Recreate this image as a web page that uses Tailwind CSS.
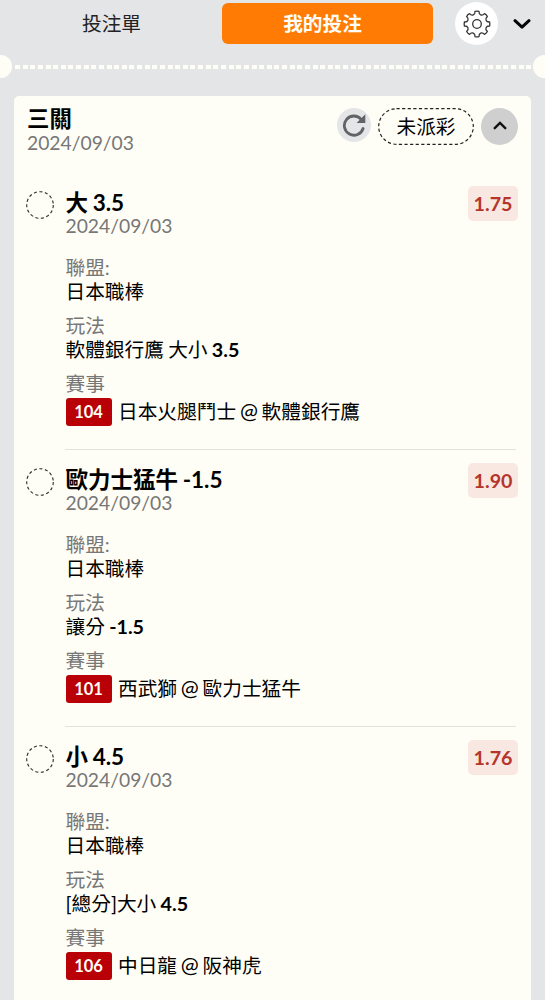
<!DOCTYPE html>
<html lang="zh-Hant">
<head>
<meta charset="utf-8">
<title>我的投注</title>
<script src="https://cdn.jsdelivr.net/npm/@tailwindcss/browser@4"></script>
</head>
<body class="h-[1000px] overflow-hidden bg-[#e4e5e7] font-['Lato','Noto_Sans_CJK_TC',sans-serif] text-[19.7px] leading-6 text-black">
<header class="flex h-[47px] items-start">
  <div class="flex h-[47px] w-[223px] items-center justify-center text-[#222]">投注單</div>
  <div class="-ml-px mt-[3px] flex h-[41px] w-[211px] items-center justify-center rounded-md bg-[#ff7b04] font-bold text-[#fffef6]"><span class="-translate-x-[5px]">我的投注</span></div>
  <div class="ml-[22px] mt-[2px] flex size-[43px] items-center justify-center rounded-full bg-white">
    <svg class="size-7" viewBox="-14 -14 28 28" fill="none" stroke="#333" stroke-width="1.3" stroke-linejoin="round"><circle r="4.3"/><path d="M12.64 2C8.93 1.74 7.54 5.09 10.36 7.52Q9.4 9.4 7.52 10.36C5.09 7.54 1.74 8.93 2 12.64Q0 13-2 12.64C-1.74 8.93-5.09 7.54-7.52 10.36Q-9.4 9.4-10.36 7.52C-7.54 5.09-8.93 1.74-12.64 2Q-13 0-12.64-2C-8.93-1.74-7.54-5.09-10.36-7.52Q-9.4-9.4-7.52-10.36C-5.09-7.54-1.74-8.93-2-12.64Q0-13 2-12.64C1.74-8.93 5.09-7.54 7.52-10.36Q9.4-9.4 10.36-7.52C7.54-5.09 8.93-1.74 12.64-2Q13 0 12.64 2Z"/></svg>
  </div>
  <svg class="ml-[15px] mt-[18px] h-3 w-[18px]" viewBox="0 0 18 12" fill="none" stroke="#050505" stroke-width="3" stroke-linecap="round" stroke-linejoin="round"><path d="M2 2.7 9 9.2 16 2.7"/></svg>
</header>
<div class="flex h-[38px] items-center justify-between overflow-hidden">
  <div class="-ml-[11px] size-[23px] shrink-0 rounded-full bg-[#fffef6]"></div>
  <div class="ml-[3px] mr-0 mt-[2px] h-[4px] flex-1 bg-[repeating-linear-gradient(90deg,#fffef6_0_5px,transparent_5px_7.63px)]"></div>
  <div class="-mr-[11px] size-[23px] shrink-0 rounded-full bg-[#fffef6]"></div>
</div>
<main class="ml-[14px] mt-[11px] h-[920px] w-[517px] rounded-t-[5px] bg-[#fffef6]">
  <div class="flex h-[76px] items-start pl-[13px] pr-[13px]">
    <div class="flex-1 pt-[11px]">
      <div class="h-6 text-[22.4px] font-bold">三關</div>
      <div class="text-[19.3px] text-[#777]">2024/09/03</div>
    </div>
    <div class="mt-[12px] flex size-[34px] items-center justify-center rounded-full bg-[#e4e5e7]">
      <svg class="size-6" viewBox="0 0 24 24" fill="none"><path d="M19.2 6.3A9.6 9.6 0 1 0 21.1 15.5" stroke="#626267" stroke-width="2.8" stroke-linecap="round"/><path d="M23.3 1.3v8.7h-8.7z" fill="#626267"/></svg>
    </div>
    <div class="ml-[7px] mt-[12px] h-[37px] w-[96px]">
      <div class="grid h-full place-items-center">
        <svg class="col-start-1 row-start-1 h-[37px] w-[96px]" fill="none" stroke="#222" stroke-width="1.2" stroke-dasharray="3.2 2.4"><rect x=".7" y=".7" width="94.6" height="35.6" rx="17.8"/></svg>
        <span class="col-start-1 row-start-1">未派彩</span>
      </div>
    </div>
    <div class="ml-[7px] mt-[12px] flex size-[37px] items-center justify-center rounded-full bg-[#cfcfcf]">
      <svg class="-mt-[2px] h-[9px] w-[14px]" viewBox="0 0 14 9" fill="none" stroke="#111" stroke-width="2.4" stroke-linecap="round"><path d="M1.7 7.2 7 2l5.3 5.2"/></svg>
    </div>
  </div>

  <section class="flex h-[277px] pl-[12px] pr-[13px]">
    <svg class="mt-[19px] size-7 shrink-0" viewBox="0 0 28 28" fill="none" stroke="#333" stroke-width="1.15" stroke-dasharray="3.1 2.5"><circle cx="14" cy="14" r="13.3"/></svg>
    <div class="ml-[11.5px] flex-1 pt-[19px] [word-spacing:-0.8px]">
      <div class="h-6 text-[22.5px] font-bold">大 3.5</div>
      <div class="-mt-px h-6 text-[19.3px] text-[#777]">2024/09/03</div>
      <div class="mt-[18px] h-6 text-[#777]">聯盟:</div>
      <div class="h-6">日本職棒</div>
      <div class="mt-[10px] h-6 text-[#777]">玩法</div>
      <div class="h-6">軟體銀行鷹 大小 <b>3.5</b></div>
      <div class="mt-[10px] h-6 text-[#777]">賽事</div>
      <div class="mt-[2px] flex h-7 items-center"><span class="flex h-7 w-[46px] items-center justify-center rounded-[3px] bg-[#b90006] text-[16.5px] font-bold text-[#fffef6]">104</span><span class="ml-[6.5px]">日本火腿鬥士 <span class="-mx-[0.5px] text-[21.5px] leading-none">@</span> 軟體銀行鷹</span></div>
    </div>
    <div class="mt-[14px] flex h-[35px] w-[50px] shrink-0 items-center justify-center rounded-[5px] bg-[#f8e8e1] font-bold text-[#b5352d]">1.75</div>
  </section>

  <div class="ml-[51px] mr-[15px] h-px bg-[#e3e2dd]"></div>
  <section class="-mt-px flex h-[277px] pl-[12px] pr-[13px]">
    <svg class="mt-[19px] size-7 shrink-0" viewBox="0 0 28 28" fill="none" stroke="#333" stroke-width="1.15" stroke-dasharray="3.1 2.5"><circle cx="14" cy="14" r="13.3"/></svg>
    <div class="ml-[11.5px] flex-1 pt-[19px] [word-spacing:-0.8px]">
      <div class="h-6 text-[22.5px] font-bold">歐力士猛牛 -1.5</div>
      <div class="-mt-px h-6 text-[19.3px] text-[#777]">2024/09/03</div>
      <div class="mt-[18px] h-6 text-[#777]">聯盟:</div>
      <div class="h-6">日本職棒</div>
      <div class="mt-[10px] h-6 text-[#777]">玩法</div>
      <div class="h-6">讓分 <b>-1.5</b></div>
      <div class="mt-[10px] h-6 text-[#777]">賽事</div>
      <div class="mt-[2px] flex h-7 items-center"><span class="flex h-7 w-[46px] items-center justify-center rounded-[3px] bg-[#b90006] text-[16.5px] font-bold text-[#fffef6]">101</span><span class="ml-[6.5px]">西武獅 <span class="-mx-[0.5px] text-[21.5px] leading-none">@</span> 歐力士猛牛</span></div>
    </div>
    <div class="mt-[14px] flex h-[35px] w-[50px] shrink-0 items-center justify-center rounded-[5px] bg-[#f8e8e1] font-bold text-[#b5352d]">1.90</div>
  </section>

  <div class="ml-[51px] mr-[15px] h-px bg-[#e3e2dd]"></div>
  <section class="-mt-px flex h-[277px] pl-[12px] pr-[13px]">
    <svg class="mt-[19px] size-7 shrink-0" viewBox="0 0 28 28" fill="none" stroke="#333" stroke-width="1.15" stroke-dasharray="3.1 2.5"><circle cx="14" cy="14" r="13.3"/></svg>
    <div class="ml-[11.5px] flex-1 pt-[19px] [word-spacing:-0.8px]">
      <div class="h-6 text-[22.5px] font-bold">小 4.5</div>
      <div class="-mt-px h-6 text-[19.3px] text-[#777]">2024/09/03</div>
      <div class="mt-[18px] h-6 text-[#777]">聯盟:</div>
      <div class="h-6">日本職棒</div>
      <div class="mt-[10px] h-6 text-[#777]">玩法</div>
      <div class="h-6">[總分]大小 <b>4.5</b></div>
      <div class="mt-[10px] h-6 text-[#777]">賽事</div>
      <div class="mt-[2px] flex h-7 items-center"><span class="flex h-7 w-[46px] items-center justify-center rounded-[3px] bg-[#b90006] text-[16.5px] font-bold text-[#fffef6]">106</span><span class="ml-[6.5px]">中日龍 <span class="-mx-[0.5px] text-[21.5px] leading-none">@</span> 阪神虎</span></div>
    </div>
    <div class="mt-[14px] flex h-[35px] w-[50px] shrink-0 items-center justify-center rounded-[5px] bg-[#f8e8e1] font-bold text-[#b5352d]">1.76</div>
  </section>
</main>
</body>
</html>
